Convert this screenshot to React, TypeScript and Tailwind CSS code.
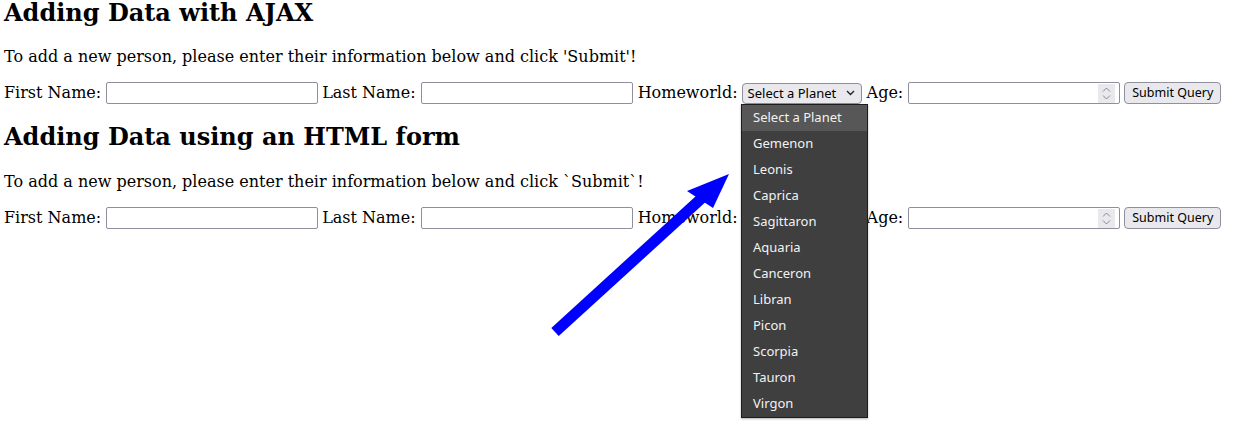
import React from "react";

const planets = [
  "Select a Planet",
  "Gemenon",
  "Leonis",
  "Caprica",
  "Sagittaron",
  "Aquaria",
  "Canceron",
  "Libran",
  "Picon",
  "Scorpia",
  "Tauron",
  "Virgon",
];

function TextBox() {
  return <div className="h-[22px] w-[212px] border border-[#8f8f9d] rounded-[2px] bg-white" />;
}

function NumberBox() {
  return (
    <div className="h-[22px] w-[212px] border border-[#8f8f9d] rounded-[2px] bg-white flex justify-end items-center pr-[4px]">
      <div className="w-[17px] h-[19px] bg-[#e9e9ed] flex items-center justify-center">
        <svg width="9" height="15" viewBox="0 0 9 15" fill="none" stroke="#8a8a8a" strokeWidth="1">
          <path d="M1 5.5 L4.5 2 L8 5.5" />
          <path d="M1 9.5 L4.5 13 L8 9.5" />
        </svg>
      </div>
    </div>
  );
}

function SelectBox() {
  return (
    <div
      className="h-[21px] w-[120px] border border-[#8f8f9d] rounded-[4px] bg-[#e9e9ed] flex items-center pl-[5px] pr-[6px] justify-between text-[13px] text-black"
      style={{ fontFamily: '"Noto Sans", "Open Sans", sans-serif' }}
    >
      <span className="leading-none">Select a Planet</span>
      <svg width="9" height="6" viewBox="0 0 9 6" fill="none" stroke="#222" strokeWidth="1.4">
        <path d="M1 1 L4.5 4.5 L8 1" />
      </svg>
    </div>
  );
}

function SubmitButton() {
  return (
    <div
      className="h-[22px] w-[97px] border border-[#8f8f9d] rounded-[4px] bg-[#e9e9ed] flex items-center justify-center text-[12.5px] text-black"
      style={{ fontFamily: '"Noto Sans", "Open Sans", sans-serif' }}
    >
      Submit Query
    </div>
  );
}

function FormRow() {
  return (
    <div className="flex items-center h-[22px] pl-[4px]">
      <span>First Name:</span>
      <div className="ml-[5px]"><TextBox /></div>
      <span className="ml-[4px]">Last Name:</span>
      <div className="ml-[5px]"><TextBox /></div>
      <span className="ml-[5px]">Homeworld:</span>
      <div className="ml-[4px]"><SelectBox /></div>
      <span className="ml-[5px]">Age:</span>
      <div className="ml-[5px]"><NumberBox /></div>
      <div className="ml-[4px]"><SubmitButton /></div>
    </div>
  );
}

export default function App() {
  return (
    <div
      className="relative w-[1242px] h-[431px] overflow-hidden bg-white text-black text-[16px]"
      style={{ fontFamily: '"DejaVu Serif", serif' }}
    >
      <h2 className="text-[24px] font-bold leading-[28px] pl-[4px] -mt-[1px]">Adding Data with AJAX</h2>
      <p className="mt-[20px] leading-[19px] pl-[4px]">
        To add a new person, please enter their information below and click 'Submit'!
      </p>
      <div className="mt-[16px]">
        <FormRow />
      </div>
      <h2 className="text-[24px] font-bold leading-[28px] pl-[4px] mt-[19px]">Adding Data using an HTML form</h2>
      <p className="mt-[21px] leading-[19px] pl-[4px]">
        To add a new person, please enter their information below and click `Submit`!
      </p>
      <div className="mt-[16px]">
        <FormRow />
      </div>

      <svg className="absolute left-0 top-0 pointer-events-none" width="1242" height="431">
        <line x1="555" y1="332" x2="703" y2="197" stroke="#0000ff" strokeWidth="11" />
        <polygon points="729,174 687,191 713,208" fill="#0000ff" />
      </svg>

      <div
        className="absolute left-[741px] top-[104px] w-[127px] bg-[#3f3f3f] border border-[#1c1c1c] text-[13px] text-[#f2f2f2] shadow-[0_1px_2px_rgba(0,0,0,0.3)]"
        style={{ fontFamily: '"Noto Sans", "Open Sans", sans-serif' }}
      >
        {planets.map((p, i) => (
          <div
            key={p}
            className={`h-[26px] flex items-center pl-[11px] ${i === 0 ? "bg-[#575757]" : ""}`}
          >
            {p}
          </div>
        ))}
      </div>
    </div>
  );
}
